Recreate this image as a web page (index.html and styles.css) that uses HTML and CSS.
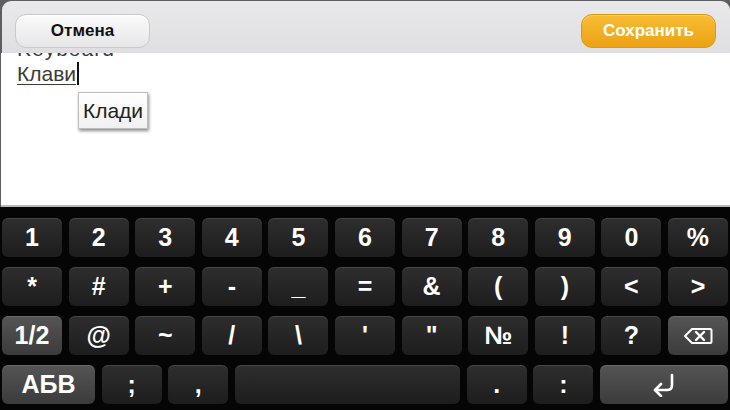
FILE: index.html
```html
<!DOCTYPE html>
<html lang="ru">
  <head>
    <meta charset="UTF-8" />
    <title>Клавиатура</title>
    <link rel="stylesheet" href="styles.css">
  </head>
  <body>
    <div class="screen">
      <div class="panel">
        <div class="toolbar">
          <button class="btn btn-cancel">Отмена</button>
          <button class="btn btn-save">Сохранить</button>
        </div>
        <div class="editor">
          <div class="line line-clipped">Keyboard</div>
          <div class="line"><span class="word">Клави</span><span class="caret"></span></div>
          <div class="suggest">Клади</div>
        </div>
      </div>

      <div class="keyboard">
        <div class="row">
          <div class="key">1</div><div class="key">2</div><div class="key">3</div>
          <div class="key">4</div><div class="key">5</div><div class="key">6</div>
          <div class="key">7</div><div class="key">8</div><div class="key">9</div>
          <div class="key">0</div><div class="key">%</div>
        </div>
        <div class="row">
          <div class="key">*</div><div class="key">#</div><div class="key">+</div>
          <div class="key">-</div><div class="key">_</div><div class="key">=</div>
          <div class="key">&amp;</div><div class="key">(</div><div class="key">)</div>
          <div class="key">&lt;</div><div class="key">&gt;</div>
        </div>
        <div class="row">
          <div class="key key-fn">1/2</div><div class="key">@</div><div class="key">~</div>
          <div class="key">/</div><div class="key">\</div><div class="key">'</div>
          <div class="key">"</div><div class="key">№</div><div class="key">!</div>
          <div class="key">?</div>
          <div class="key key-fn">
            <svg width="30" height="18" viewBox="0 0 30 18">
              <path d="M9 2 H27 a1.5 1.5 0 0 1 1.5 1.5 V14.5 a1.5 1.5 0 0 1 -1.5 1.5 H9 L2 9 Z" fill="none" stroke="#fff" stroke-width="2" stroke-linejoin="round" />
              <path d="M13 5 L21 13 M21 5 L13 13" stroke="#fff" stroke-width="2.4" stroke-linecap="round" />
            </svg>
          </div>
        </div>
        <div class="row row-bottom">
          <div class="key key-fn">АБВ</div><div class="key">;</div><div class="key">,</div>
          <div class="key"></div>
          <div class="key">.</div><div class="key">:</div>
          <div class="key key-fn">
            <svg width="26" height="24" viewBox="0 0 26 24">
              <path d="M21 2 V12 Q21 17 16 17 H4" fill="none" stroke="#fff" stroke-width="2.6" stroke-linecap="round" />
              <path d="M10 11 L4 17 L10 23" fill="none" stroke="#fff" stroke-width="2.6" stroke-linecap="round" stroke-linejoin="round" />
            </svg>
          </div>
        </div>
      </div>
    </div>
  </body>
</html>
```

FILE: styles.css
```css
:root {
  --frame: #5e5e5e;
  --bar: #e3e3e5;
  --key-top: #2e2e2e;
  --key-bottom: #1d1d1d;
  --fn-top: #555555;
  --fn-bottom: #3b3b3b;
}
* {
  box-sizing: border-box;
}
body {
  margin: 0;
  width: 730px;
  height: 410px;
  overflow: hidden;
  font-family: "Liberation Sans", Arial, sans-serif;
  background-color: #050505;
}
.screen {
  display: flex;
  flex-direction: column;
  height: 410px;
}
.panel {
  background-color: var(--frame);
  padding: 1px 0 0 2px;
}
.toolbar {
  display: flex;
  justify-content: space-between;
  align-items: center;
  height: 52px;
  padding: 7px 14px 0 13px;
  background: linear-gradient(#e9e9eb, #dfdfe1);
  border-radius: 9px 9px 0 0;
}
.btn {
  width: 135px;
  height: 34px;
  border-radius: 11px;
  font-family: inherit;
  font-size: 17px;
  font-weight: 700;
  cursor: pointer;
}
.btn-cancel {
  color: #111;
  border: 1px solid #c9c9cb;
  background: linear-gradient(#fbfbfb, #e6e6e8);
  box-shadow: inset 0 1px 0 #fff;
}
.btn-save {
  color: #fff;
  border: 1px solid #d99a10;
  background: linear-gradient(#f8bd35, #eca213);
  box-shadow: inset 0 1px 0 #fbd06b;
}
.editor {
  position: relative;
  height: 154px;
  background: #fff;
  margin-left: -1px;
  padding: 0 16px;
  overflow: hidden;
  border-bottom: 2px solid #b9b9b9;
}
.line {
  font-size: 21px;
  line-height: 25px;
  color: #3a3a3a;
  display: flex;
  align-items: center;
}
.line-clipped {
  margin-top: -17px;
  letter-spacing: 1px;
}
.word {
  text-decoration: underline;
  text-decoration-thickness: 1px;
  text-underline-offset: 3px;
}
.caret {
  display: inline-block;
  width: 2px;
  height: 23px;
  margin-left: 1px;
  background: #111;
}
.suggest {
  position: absolute;
  left: 77px;
  top: 39px;
  width: 70px;
  height: 37px;
  border: 1px solid #bdbdbd;
  background: linear-gradient(#ffffff, #f1f1f1);
  box-shadow: 1px 2px 3px rgba(0, 0, 0, 0.45);
  font-size: 21px;
  color: #222;
  display: flex;
  align-items: center;
  justify-content: center;
}
.keyboard {
  flex: 1;
  display: flex;
  flex-direction: column;
  gap: 10px;
  padding: 11px 2px 0 2px;
  background: #050505;
}
.row {
  display: grid;
  grid-template-columns: repeat(11, 1fr);
  column-gap: 6.6px;
  height: 39px;
}
.row-bottom {
  grid-template-columns: 93px 60px 60px 1fr 60px 60px 128px;
}
.key {
  display: flex;
  align-items: center;
  justify-content: center;
  border-radius: 6px;
  background: linear-gradient(var(--key-top), var(--key-bottom));
  box-shadow: inset 0 1px 0 rgba(255, 255, 255, 0.12);
  color: #fff;
  font-size: 25px;
  font-weight: 700;
}
.key-fn {
  background: linear-gradient(var(--fn-top), var(--fn-bottom));
}
```
